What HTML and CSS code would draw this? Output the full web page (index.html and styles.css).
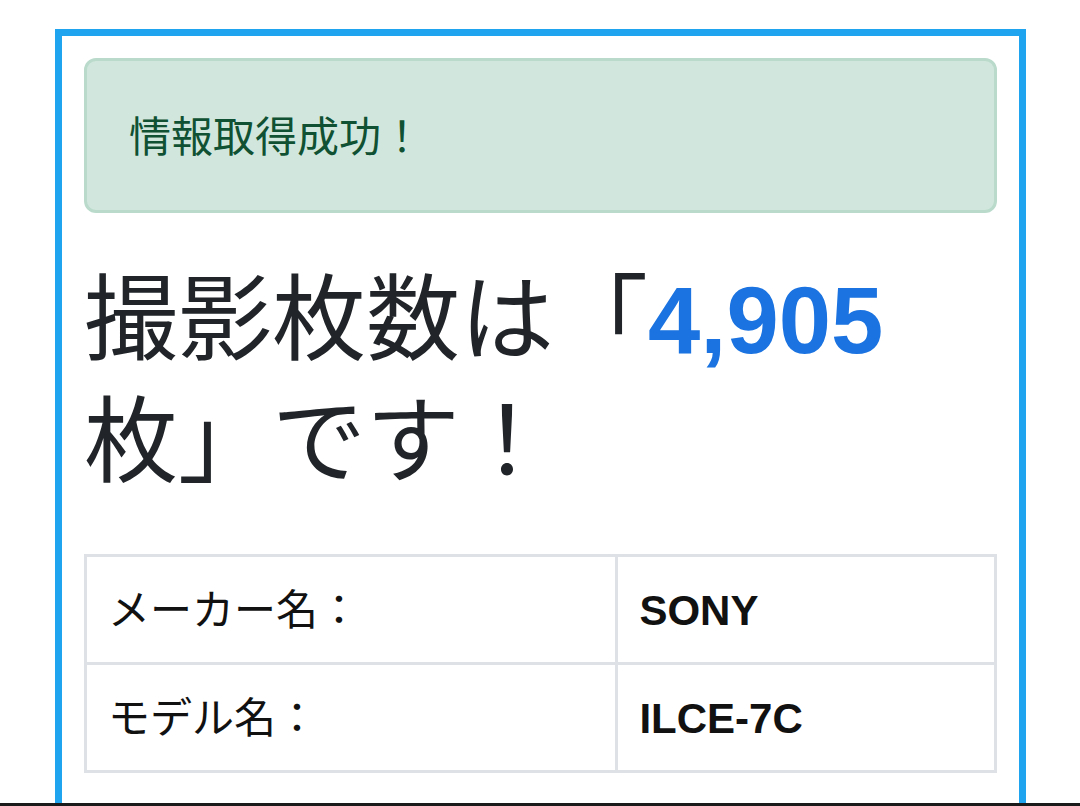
FILE: index.html
```html
<!DOCTYPE html>
<html lang="ja">
<head>
    <meta charset="UTF-8">
    <meta name="viewport" content="width=device-width, initial-scale=1.0">
    <title>撮影枚数チェッカー</title>
    <link rel="stylesheet" href="styles.css">
</head>
<body>
    <div class="frame">
        <div class="alert">情報取得成功！</div>

        <h1 class="count">撮影枚数は「<span class="count-number">4,905</span>枚」です！</h1>

        <table class="info-table">
            <tr>
                <td class="label">メーカー名：</td>
                <td class="value">SONY</td>
            </tr>
            <tr>
                <td class="label">モデル名：</td>
                <td class="value">ILCE-7C</td>
            </tr>
        </table>
    </div>

    <div class="bottom-line"></div>
</body>
</html>
```

FILE: styles.css
```css
body {
    margin: 29px 54px 0 55px;
    background-color: #fff;
    font-family: "Liberation Sans", "Noto Sans CJK JP", sans-serif;
    color: #212529;
    overflow: hidden;
}
.frame {
    border: 7px solid #1fa5f0;
    padding: 22px 22px;
    height: 900px;
}
.alert {
    background-color: #d1e7dd;
    border: 3px solid #badbcc;
    border-radius: 12px;
    color: #0f5132;
    font-size: 42px;
    line-height: 63px;
    padding: 45px 42px 41px;
    margin-bottom: 47px;
}
.count {
    font-size: 94px;
    font-weight: normal;
    line-height: 122px;
    margin: 0 0 50px;
    color: #212529;
}
.count-number {
    color: #1a73e0;
    font-weight: bold;
}
.info-table {
    width: 100%;
    border-collapse: collapse;
    font-size: 42px;
    line-height: 63px;
}
.info-table td {
    border: 3px solid #dee2e6;
    padding: 22px 21px 20px;
    color: #111;
}
.info-table .label {
    width: 58.4%;
}
.info-table .value {
    font-weight: bold;
}
.bottom-line {
    position: fixed;
    left: 0;
    right: 0;
    bottom: 0;
    height: 3px;
    background-color: #1a1a1a;
}
```
